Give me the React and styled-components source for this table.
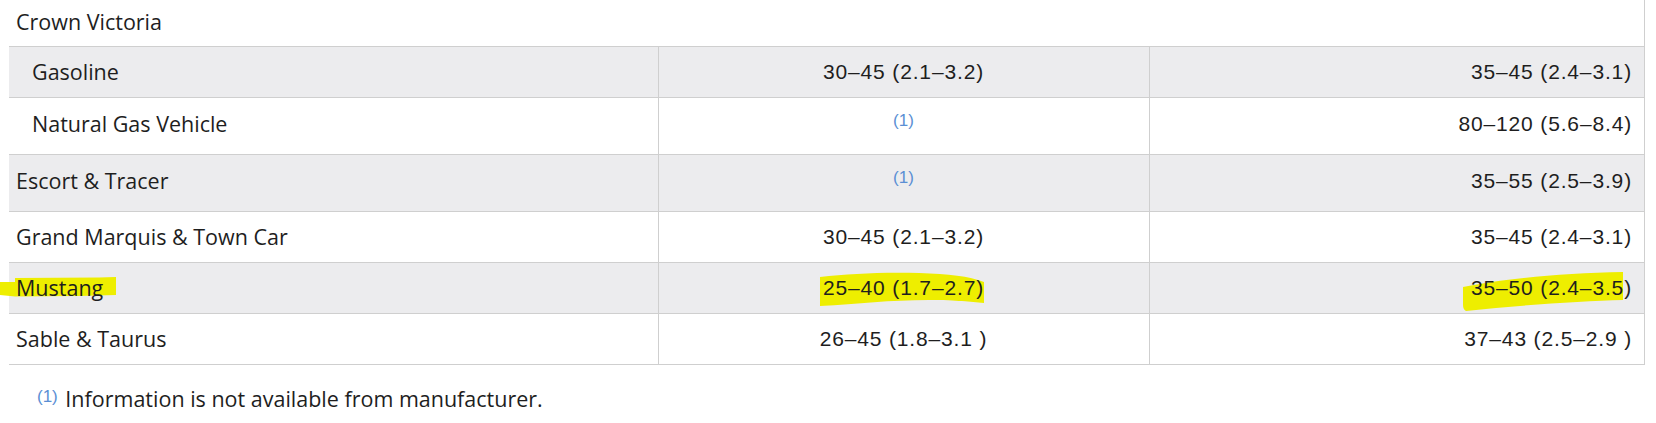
import React from "react";
import styled, { createGlobalStyle } from "styled-components";

const GlobalStyle = createGlobalStyle`
  html, body { margin: 0; padding: 0; background: #ffffff; }
  body { font-family: "Open Sans", "Noto Sans", sans-serif; color: #1e1e1e; }
`;

const Page = styled.div`
  padding: 0 11px 0 9px;
`;

const Table = styled.table`
  width: 100%;
  border-collapse: collapse;
  table-layout: fixed;
  border-right: 1px solid #cfcfcf;
`;

const Row = styled.tr`
  background: ${(p) => (p.$shade ? "#ececee" : "#ffffff")};
  border-bottom: 1px solid #cfcfcf;
`;

const GroupCell = styled.td`
  padding: 7px 8px 9px 7px;
  font-family: "Open Sans", sans-serif;
  font-size: 21.5px;
  line-height: 30px;
  color: #1e1e1e;
`;

const NameCell = styled.td`
  padding: ${(p) => (p.$tall ? "11px" : "10px")} 8px
    ${(p) => (p.$tall ? "15px" : "10px")} ${(p) => (p.$indent ? "23px" : "7px")};
  font-family: "Open Sans", sans-serif;
  font-size: 21.5px;
  line-height: 30px;
  color: #1e1e1e;
  border-right: 1px solid #cfcfcf;
  white-space: nowrap;
`;

const ValueCell = styled.td`
  padding: ${(p) => (p.$tall ? "11px 12px 15px" : "10px 12px")};
  font-family: "Liberation Sans", Arial, sans-serif;
  font-size: 21px;
  line-height: 30px;
  letter-spacing: 0.85px;
  color: #1e1e1e;
  text-align: ${(p) => p.$align || "center"};
  border-right: ${(p) => (p.$last ? "none" : "1px solid #cfcfcf")};
  white-space: nowrap;
`;

const Note = styled.span`
  font-family: "Liberation Sans", Arial, sans-serif;
  font-size: 17px;
  line-height: 1;
  letter-spacing: 0;
  vertical-align: 5px;
  color: #5b8fd4;
  margin-right: ${(p) => (p.$gap ? "2px" : "0")};
`;

const Mark = styled.span`
  position: relative;
  display: inline-block;
  z-index: 0;
`;

const Stroke = styled.svg`
  position: absolute;
  z-index: -1;
  pointer-events: none;
  overflow: visible;
`;

const Footnote = styled.p`
  margin: 19px 0 0 28px;
  font-family: "Open Sans", sans-serif;
  font-size: 21.5px;
  line-height: 30px;
  color: #1e1e1e;
`;

const YELLOW = "#eeee00";

function Highlight({ children, box, d }) {
  const [left, top, width, height] = box;
  return (
    <Mark>
      <Stroke
        width={width}
        height={height}
        viewBox={`0 0 ${width} ${height}`}
        style={{ left, top }}
      >
        <path d={d} fill={YELLOW} />
      </Stroke>
      {children}
    </Mark>
  );
}

const rows = [
  { name: "Gasoline", indent: true, a: "30–45 (2.1–3.2)", b: "35–45 (2.4–3.1)", shade: true },
  { name: "Natural Gas Vehicle", indent: true, a: null, b: "80–120 (5.6–8.4)", tall: true },
  { name: "Escort & Tracer", a: null, b: "35–55 (2.5–3.9)", shade: true, tall: true },
  { name: "Grand Marquis & Town Car", a: "30–45 (2.1–3.2)", b: "35–45 (2.4–3.1)" },
  { name: "Mustang", a: "25–40 (1.7–2.7)", b: "35–50 (2.4–3.5)", shade: true, marked: true },
  { name: "Sable & Taurus", a: "26–45 (1.8–3.1 )", b: "37–43 (2.5–2.9 )" },
];

export default function App() {
  return (
    <>
      <GlobalStyle />
      <Page>
        <Table>
          <colgroup>
            <col style={{ width: 649 }} />
            <col style={{ width: 491 }} />
            <col />
          </colgroup>
          <tbody>
            <Row>
              <GroupCell colSpan={3}>Crown Victoria</GroupCell>
            </Row>
            {rows.map((r) => (
              <Row key={r.name} $shade={r.shade}>
                <NameCell $indent={r.indent} $tall={r.tall}>
                  {r.marked ? (
                    <Highlight
                      box={[-17, 4, 118, 20]}
                      d="M0 5 L16 5 L16 1 L100 0.5 L117 0 L117 18 L80 19 L16 19.5 L0 18 Z"
                    >
                      {r.name}
                    </Highlight>
                  ) : (
                    r.name
                  )}
                </NameCell>
                <ValueCell $tall={r.tall}>
                  {r.a === null ? (
                    <Note>(1)</Note>
                  ) : r.marked ? (
                    <Highlight
                      box={[-4, -1, 166, 35]}
                      d="M1 5 C30 2 60 0 100 1 C130 2 150 4 165 10 L165 31 C150 30 140 28 110 28 C70 28 40 32 1 34 Z"
                    >
                      {r.a}
                    </Highlight>
                  ) : (
                    r.a
                  )}
                </ValueCell>
                <ValueCell $tall={r.tall} $align="right" $last>
                  {r.marked ? (
                    <Highlight
                      box={[-9, -2, 162, 41]}
                      d="M1 16 C40 8 100 2 161 1 L161 29 C120 30 60 34 4 40 C2 39 1 37 1 34 Z"
                    >
                      {r.b}
                    </Highlight>
                  ) : (
                    r.b
                  )}
                </ValueCell>
              </Row>
            ))}
          </tbody>
        </Table>
        <Footnote>
          <Note $gap>(1)</Note> Information is not available from manufacturer.
        </Footnote>
      </Page>
    </>
  );
}
